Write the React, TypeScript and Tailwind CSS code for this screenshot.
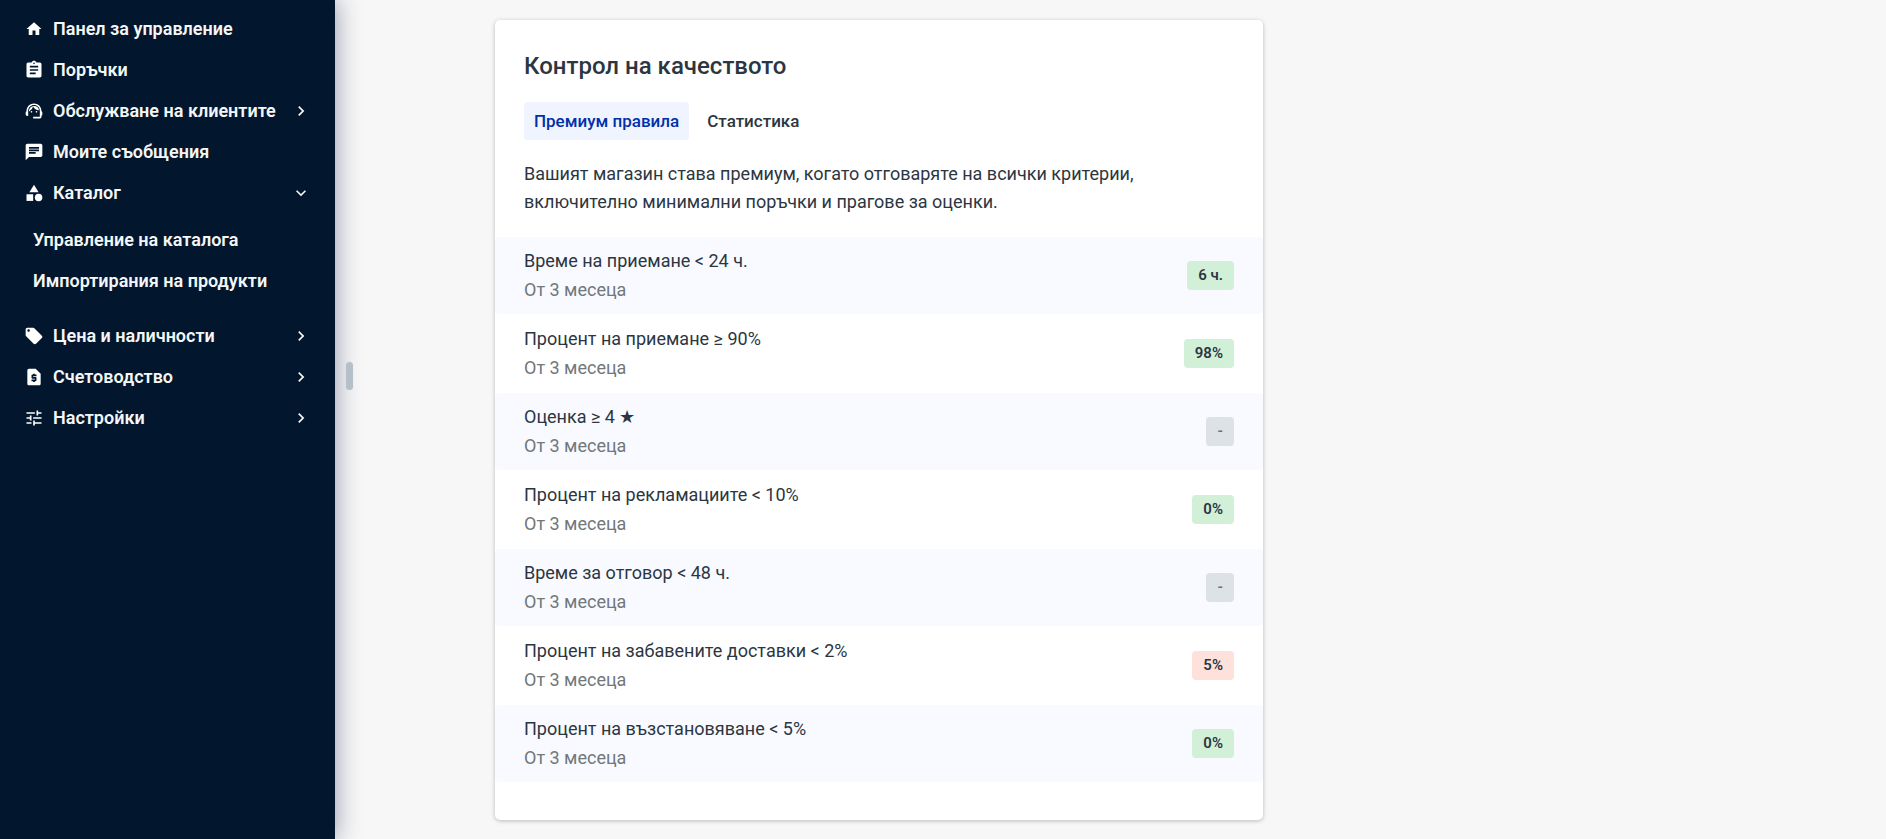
import { useState } from 'react';
import type { IconType } from 'react-icons';
import {
  MdAssignment,
  MdCategory,
  MdChat,
  MdChevronRight,
  MdExpandMore,
  MdHome,
  MdLocalOffer,
  MdRequestPage,
  MdSupportAgent,
  MdTune,
} from 'react-icons/md';
import clsx from 'clsx';

type NavItem = {
  label: string;
  icon: IconType;
  iconClass?: string;
  expandable?: boolean;
  children?: string[];
};

const navItems: NavItem[] = [
  { label: 'Панел за управление', icon: MdHome, iconClass: 'size-[18px]' },
  { label: 'Поръчки', icon: MdAssignment },
  { label: 'Обслужване на клиентите', icon: MdSupportAgent, expandable: true },
  { label: 'Моите съобщения', icon: MdChat },
  {
    label: 'Каталог',
    icon: MdCategory,
    expandable: true,
    children: ['Управление на каталога', 'Импортирания на продукти'],
  },
  { label: 'Цена и наличности', icon: MdLocalOffer, expandable: true },
  { label: 'Счетоводство', icon: MdRequestPage, expandable: true },
  { label: 'Настройки', icon: MdTune, expandable: true },
];

type Status = 'good' | 'bad' | 'none';

const rules: { label: string; value: string; status: Status }[] = [
  { label: 'Време на приемане < 24 ч.', value: '6 ч.', status: 'good' },
  { label: 'Процент на приемане ≥ 90%', value: '98%', status: 'good' },
  { label: 'Оценка ≥ 4 ★', value: '-', status: 'none' },
  { label: 'Процент на рекламациите < 10%', value: '0%', status: 'good' },
  { label: 'Време за отговор < 48 ч.', value: '-', status: 'none' },
  { label: 'Процент на забавените доставки < 2%', value: '5%', status: 'bad' },
  { label: 'Процент на възстановяване < 5%', value: '0%', status: 'good' },
];

const badgeStyles: Record<Status, string> = {
  good: 'bg-[#d1f0d7] text-[#2c3641]',
  bad: 'bg-[#ffe1db] text-[#2c3641]',
  none: 'bg-[#dde2e6] text-[#6c7378]',
};

const tabs = ['Премиум правила', 'Статистика'];

function Sidebar() {
  const [open, setOpen] = useState('Каталог');

  return (
    <aside className="relative z-10 w-[335px] shrink-0 bg-[#02172d] pt-2 text-lg leading-[25px] font-semibold text-[#f5f6f7] shadow-[0_0_24px_rgba(20,30,80,0.45)]">
      <nav>
        <ul>
          {navItems.map((item) => {
            const Icon = item.icon;
            const isOpen = open === item.label;
            const Chevron = isOpen ? MdExpandMore : MdChevronRight;
            const content = (
              <>
                <span className="flex size-5 shrink-0 items-center justify-center text-white">
                  <Icon className={item.iconClass ?? 'size-5'} />
                </span>
                <span className="flex-1 text-left">{item.label}</span>
                {item.expandable && <Chevron className="size-5 shrink-0" />}
              </>
            );
            return (
              <li key={item.label}>
                {item.expandable ? (
                  <button
                    type="button"
                    aria-expanded={isOpen}
                    onClick={() => setOpen(isOpen ? '' : item.label)}
                    className="flex w-full items-center gap-[9px] px-6 py-2"
                  >
                    {content}
                  </button>
                ) : (
                  <a href="#" className="flex items-center gap-[9px] px-6 py-2">
                    {content}
                  </a>
                )}
                {isOpen && item.children && (
                  <ul className="pt-1.5 pb-3.5">
                    {item.children.map((child) => (
                      <li key={child}>
                        <a href="#" className="block py-2 pl-[33px]">{child}</a>
                      </li>
                    ))}
                  </ul>
                )}
              </li>
            );
          })}
        </ul>
      </nav>
      <button
        type="button"
        aria-label="Преоразмеряване на менюто"
        className="absolute top-[362px] left-full ml-[11px] h-7 w-[7px] cursor-col-resize rounded-full bg-[#b4bfc8]"
      />
    </aside>
  );
}

export default function App() {
  const [tab, setTab] = useState(tabs[0]);

  return (
    <div lang="bg" className="flex min-h-screen bg-[#f7f7f7] font-['Roboto',sans-serif]">
      <Sidebar />
      <main className="min-w-0 flex-1 pt-5 pr-6 pb-[18px] pl-40">
        <section className="max-w-3xl rounded-[5px] bg-white pt-7 pb-[38px] text-lg leading-7 text-[#2c3641] shadow-[0_1px_4px_rgba(0,0,0,0.25)]">
          <h1 className="px-[29px] text-2xl leading-9 font-medium">Контрол на качеството</h1>

          <div role="tablist" className="mt-[18px] flex gap-2 px-[29px]">
            {tabs.map((t) => (
              <button
                key={t}
                type="button"
                role="tab"
                aria-selected={tab === t}
                onClick={() => setTab(t)}
                className={clsx(
                  'rounded px-[10px] py-[5px] text-[17px] font-medium',
                  tab === t ? 'bg-[#eff4ff] text-[#0030a9]' : 'text-[#2c3641]',
                )}
              >
                {t}
              </button>
            ))}
          </div>

          <p className="mt-5 max-w-[700px] px-[29px]">
            Вашият магазин става премиум, когато отговаряте на всички критерии, включително минимални поръчки и прагове за оценки.
          </p>

          <ul className="mt-[21px] flex flex-col gap-px">
            {rules.map((rule) => (
              <li
                key={rule.label}
                className="flex items-center justify-between rounded px-[29px] py-2.5 odd:bg-[#f8faff]"
              >
                <div className="flex flex-col gap-px">
                  <span>{rule.label}</span>
                  <span className="text-[#71777b]">От 3 месеца</span>
                </div>
                <span className={clsx('rounded px-[11px] text-[15px] leading-[29px] font-semibold', badgeStyles[rule.status])}>
                  {rule.value}
                </span>
              </li>
            ))}
          </ul>
        </section>
      </main>
    </div>
  );
}
